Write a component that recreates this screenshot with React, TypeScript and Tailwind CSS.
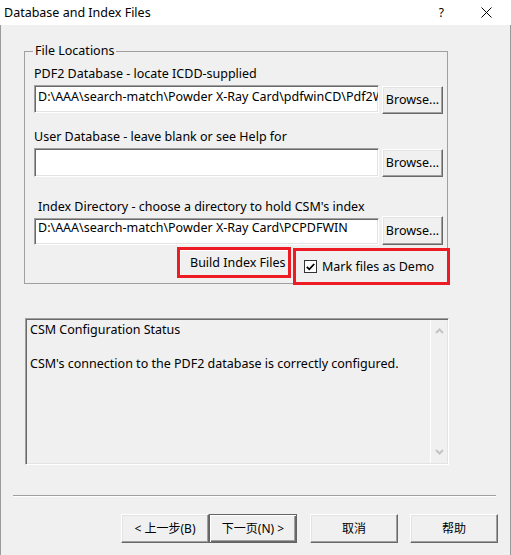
import React from "react";

const font = { fontFamily: '"Noto Sans", "Noto Sans CJK SC", sans-serif' };

const sunken =
  "border border-t-[#a0a0a0] border-l-[#a0a0a0] border-b-white border-r-white shadow-[inset_1px_1px_0_#696969,inset_-1px_-1px_0_#e3e3e3]";
const raised =
  "border border-t-white border-l-white border-b-[#696969] border-r-[#696969] shadow-[inset_-1px_-1px_0_#a0a0a0,inset_1px_1px_0_#e3e3e3] bg-[#f0f0f0]";

function Browse({ extra = "" }: { extra?: string }) {
  return (
    <div className={`${raised} shrink-0 w-[61px] h-[28px] ml-[3px] flex items-center justify-center text-[12.5px] leading-[16px] ${extra}`}>
      Browse...
    </div>
  );
}

function Chevron({ up }: { up?: boolean }) {
  return (
    <svg width="9" height="6" viewBox="0 0 9 6" className="block">
      <path
        d={up ? "M1 5 L4.5 1.5 L8 5" : "M1 1 L4.5 4.5 L8 1"}
        fill="none"
        stroke="#c4c4c4"
        strokeWidth="2"
      />
    </svg>
  );
}

function DlgButton({ label, def }: { label: string; def?: boolean }) {
  return (
    <div
      className={`h-[29px] w-[88px] flex items-center justify-center text-[12px] leading-[16px] ${
        def
          ? "border border-[#646464] shadow-[inset_1px_1px_0_#fff,inset_-1px_-1px_0_#696969,inset_-2px_-2px_0_#a0a0a0] bg-[#f0f0f0]"
          : raised
      }`}
    >
      {label}
    </div>
  );
}

export default function App() {
  return (
    <div className="w-[511px] h-[555px] flex flex-col text-black overflow-hidden" style={font}>
      {/* Title bar */}
      <div className="h-[25px] bg-white flex items-center text-[12.5px] leading-[16px] pl-[4px] shrink-0">
        <span>Database and Index Files</span>
        <span className="ml-auto mr-[37px] text-[12px]">?</span>
        <svg width="11" height="11" viewBox="0 0 11 11" className="mr-[19px]">
          <path d="M0.5 0.5 L10.5 10.5 M10.5 0.5 L0.5 10.5" stroke="#000" strokeWidth="1" />
        </svg>
      </div>

      {/* Body */}
      <div className="flex-1 bg-[#f0f0f0] border-l border-r border-[#9a9a9a] flex flex-col">
        {/* Group box */}
        <div className="relative ml-[23px] mt-[26px] w-[424px] h-[233px] shrink-0 border border-[#a0a0a0] pl-[9px] pr-[4px] text-[12.5px] leading-[16px]">
          <div className="absolute left-[8px] top-[-9px] px-[2px] bg-[#f0f0f0]">File Locations</div>

          <div className="mt-[14px] whitespace-nowrap">PDF2 Database - locate ICDD-supplied</div>
          <div className="flex items-start mt-[3px]">
            <div className={`${sunken} shrink-0 bg-white w-[345px] h-[28px] px-[3px] pt-[3px] overflow-hidden whitespace-nowrap`}>
              D:\AAA\search-match\Powder X-Ray Card\pdfwinCD\Pdf2WIN
            </div>
            <Browse extra="mt-[1px]" />
          </div>

          <div className="mt-[15px] whitespace-nowrap">User Database - leave blank or see Help for</div>
          <div className="flex items-start mt-[3px]">
            <div className={`${sunken} shrink-0 bg-white w-[345px] h-[29px]`} />
            <Browse extra="mt-[1px]" />
          </div>

          <div className="mt-[22px] ml-[4px] whitespace-nowrap">Index Directory - choose a directory to hold CSM's index</div>
          <div className="flex items-start mt-[1px]">
            <div className={`${sunken} shrink-0 bg-white w-[345px] h-[27px] mt-[2px] px-[3px] pt-[1px] overflow-hidden whitespace-nowrap`}>
              D:\AAA\search-match\Powder X-Ray Card\PCPDFWIN
            </div>
            <Browse extra="h-[29px]" />
          </div>

          <div className="flex items-start mt-[2px] ml-[143px]">
            <div className="shrink-0 w-[114px] h-[31px] border-[3px] border-[#ed1c24] flex items-center pl-[10px] whitespace-nowrap shadow-[inset_1px_1px_0_#fff]">
              Build Index Files
            </div>
            <div className="shrink-0 w-[157px] h-[37px] ml-[2px] mt-[1px] border-[3px] border-[#ed1c24] flex items-center pl-[8px] whitespace-nowrap">
              <div className="shrink-0 w-[13px] h-[13px] border border-[#333] bg-white flex items-center justify-center mr-[5px]">
                <svg width="9" height="8" viewBox="0 0 9 8">
                  <path d="M0.8 3.8 L3.3 6.3 L8.2 1" fill="none" stroke="#000" strokeWidth="1.8" />
                </svg>
              </div>
              <span>Mark files as Demo</span>
            </div>
          </div>
        </div>

        {/* Status box */}
        <div className={`${sunken} ml-[24px] mt-[34px] w-[424px] h-[147px] shrink-0 bg-[#f0f0f0] flex text-[12.5px] leading-[16px]`}>
          <div className="flex-1 pl-[4px] pt-[3px] whitespace-nowrap">
            <div>CSM Configuration Status</div>
            <div className="mt-[18px]">CSM's connection to the PDF2 database is correctly configured.</div>
          </div>
          <div className="w-[17px] border-l border-white flex flex-col items-center justify-between py-[8px] mr-[1px] my-[1px]">
            <Chevron up />
            <Chevron />
          </div>
        </div>

        {/* Separator */}
        <div className="ml-[12px] mt-[30px] w-[483px] h-[2px] shrink-0 border-t border-[#a0a0a0] border-b border-b-white" />

        {/* Buttons */}
        <div className="flex mt-[17px] ml-[120px] text-[12px]">
          <DlgButton label="<  上一步(B)" />
          <DlgButton label="下一页(N)  >" def />
          <div className="ml-[13px]">
            <DlgButton label="取消" />
          </div>
          <div className="ml-[12px]">
            <DlgButton label="帮助" />
          </div>
        </div>
      </div>
    </div>
  );
}
